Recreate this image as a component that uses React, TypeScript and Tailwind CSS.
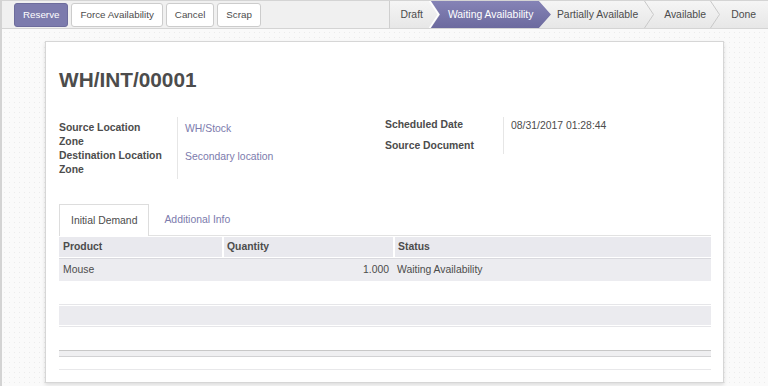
import React from 'react';

// Stock picking form (Odoo-like) — WH/INT/00001

const font = "font-['Liberation_Sans',Arial,sans-serif]";

function Chevron({ color = '#c9c9c9' }: { color?: string }) {
  return (
    <svg className="absolute right-0 top-0 h-full w-[10px]" viewBox="0 0 10 27" preserveAspectRatio="none">
      <polyline points="0.5,0 9.5,13.5 0.5,27" fill="none" stroke={color} strokeWidth="1" />
    </svg>
  );
}

function StatusBar() {
  return (
    <div className="flex h-full items-stretch border-l border-[#cfcfcf] bg-[linear-gradient(#f5f5f5,#e7e7e7)] text-[10.4px] text-[#4c4c4c]">
      <div className="relative flex items-center pl-[10px] pr-[7px]">
        Draft
        <svg className="absolute -right-[9px] top-0 h-full w-[10px]" viewBox="0 0 10 27" preserveAspectRatio="none">
          <polyline points="0.5,0 9.5,13.5 0.5,27" fill="none" stroke="#ffffff" strokeWidth="1.5" />
        </svg>
      </div>
      <div className="flex w-[121px] items-center bg-[linear-gradient(#8583b6,#6c6a9e)] pl-[18px] text-white [clip-path:polygon(1px_0,109px_0,121px_50%,109px_100%,1px_100%,10px_50%)]">
        Waiting Availability
      </div>
      <div className="relative flex items-center pl-[6px] pr-[16px]">
        Partially Available
        <Chevron />
      </div>
      <div className="relative flex items-center pl-[10px] pr-[14px]">
        Available
        <Chevron />
      </div>
      <div className="flex items-center pl-[11px] pr-[12px]">Done</div>
    </div>
  );
}

function ControlPanel() {
  const btn = 'h-[24px] rounded-[3px] border px-[8px] text-[9.8px] leading-none';
  return (
    <div className="flex h-[29px] items-stretch justify-between border-y border-[#d4d4d4] bg-[#f0f0f0]">
      <div className="flex items-start gap-[3px] pl-[12px] pt-[2px]">
        <button className={`${btn} border-[#6d6c9c] bg-[#7c7bad] text-white`}>Reserve</button>
        <button className={`${btn} border-[#cccccc] bg-white text-[#4c4c4c]`}>Force Availability</button>
        <button className={`${btn} border-[#cccccc] bg-white text-[#4c4c4c]`}>Cancel</button>
        <button className={`${btn} border-[#cccccc] bg-white text-[#4c4c4c]`}>Scrap</button>
      </div>
      <StatusBar />
    </div>
  );
}

function FieldGroups() {
  return (
    <div className="mt-[27px] grid grid-cols-2 text-[10.4px] leading-[14px]">
      {/* left group */}
      <div className="grid grid-cols-[118px_1fr]">
        <div className="py-[3px] font-bold text-[#4c4c4c]">
          <div className="h-[28px] pt-px">Source Location<br />Zone</div>
          <div className="h-[28px] pt-px">Destination Location<br />Zone</div>
        </div>
        <div className="border-l border-[#e6e6e6] py-[3px] pl-[7px] text-[#7c7bad]">
          <div className="h-[28px] pt-[2px]">WH/Stock</div>
          <div className="h-[28px] pt-[2px]">Secondary location</div>
        </div>
      </div>
      {/* right group */}
      <div className="grid grid-cols-[118px_1fr] self-start">
        <div className="font-bold text-[#4c4c4c]">
          <div className="h-[21px] pt-[1px]">Scheduled Date</div>
          <div className="h-[16px] pt-[1px]">Source Document</div>
        </div>
        <div className="border-l border-[#e6e6e6] pl-[7px] text-[#4c4c4c]">
          <div className="h-[21px] pt-[2px]">08/31/2017 01:28:44</div>
          <div className="h-[16px]"></div>
        </div>
      </div>
    </div>
  );
}

function Lines() {
  return (
    <div className="text-[10.4px] leading-[14px] text-[#4c4c4c]">
      <div className="flex h-[21px] items-center border-t border-white bg-[#e9e9ee] font-bold">
        <div className="w-[163px] pl-[4px]">Product</div>
        <div className="flex w-[171px] items-center self-stretch border-l-2 border-white pl-[3px]">Quantity</div>
        <div className="flex flex-1 items-center self-stretch border-l-2 border-white pl-[3px]">Status</div>
      </div>
      <div className="h-px bg-white" />
      <div className="h-px bg-[#d9d9de]" />
      <div className="flex h-[22px] items-center bg-[#ececf0]">
        <div className="w-[163px] pl-[4px]">Mouse</div>
        <div className="w-[171px] pr-[4px] text-right">1.000</div>
        <div className="flex-1 pl-[4px]">Waiting Availability</div>
      </div>

      <div className="mt-[23px] h-px bg-[#e6e6e9]" />
      <div className="h-px bg-white" />
      <div className="h-[19px] bg-[#ebebef]" />
      <div className="h-px bg-white" />
      <div className="h-px bg-[#e6e6e9]" />

      <div className="mt-[23px] h-px bg-[#c8c8c8]" />
      <div className="h-[5px] bg-[#efeff1]" />
      <div className="h-px bg-[#d2d2d4]" />
      <div className="mt-[12px] h-px bg-[#e8e8ea]" />
    </div>
  );
}

export default function App() {
  return (
    <div
      className={`${font} min-h-screen w-full border-l-2 border-[#d3d3d3] bg-[#fafafa] bg-[radial-gradient(#ececec_0.9px,transparent_1px)] bg-[length:5px_5px]`}
    >
      <ControlPanel />

      <div className="ml-[43px] mt-[12px] h-[342px] w-[679px] border border-[#d6d6d6] bg-white pl-[13px] pr-[12px] shadow-[0_2px_4px_rgba(0,0,0,0.12)]">
        <h1 className="pt-[27px] text-[20.8px] font-bold leading-[21px] text-[#4c4c4c]">WH/INT/00001</h1>

        <FieldGroups />

        {/* notebook tabs */}
        <div className="mt-[25px] flex border-b border-[#e2e2e2] text-[10.4px] leading-[14px]">
          <div className="relative -mb-px flex h-[32px] items-center border border-b-0 border-[#dddddd] bg-white px-[11px] text-[#4c4c4c]">
            Initial Demand
          </div>
          <div className="ml-[3px] flex h-[31px] items-center border border-transparent px-[11px] text-[#7c7bad]">
            Additional Info
          </div>
        </div>

        <Lines />
      </div>
    </div>
  );
}
